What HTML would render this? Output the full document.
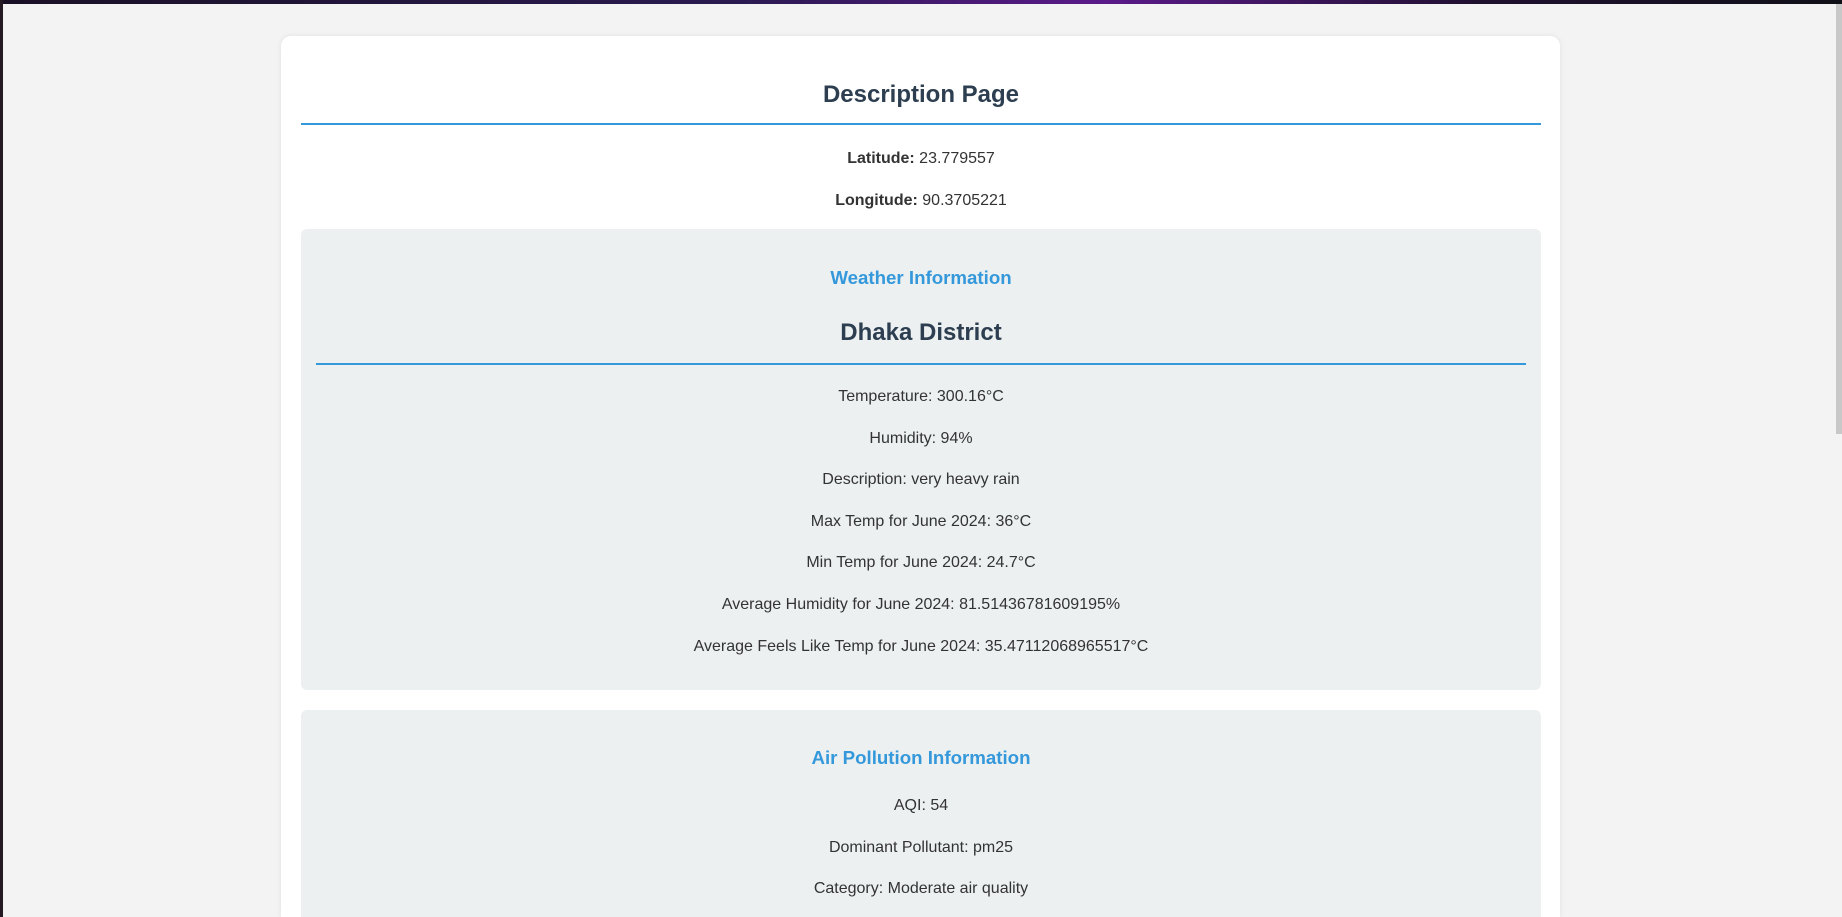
<!DOCTYPE html>
<html style="width:1842px;height:917px;overflow:hidden;"><head><meta charset="utf-8"><style>
html,body{margin:0;padding:0;}
body{width:1842px;height:917px;overflow:hidden;background:#f3f3f3;font-family:"Liberation Sans",sans-serif;color:#333;position:relative;}
.topbar{position:absolute;left:0;top:0;width:1842px;height:4px;background:linear-gradient(90deg,#1a1025,#2a1a50 40%,#5a1a8a 60%,#201030 80%,#101018);}
.leftbar{position:absolute;left:0;top:0;width:3px;height:917px;background:#241a24;}
.scroll{position:absolute;left:1836px;top:4px;width:6px;height:430px;background:#c8c8c8;}
.card{position:absolute;left:281px;top:36px;width:1279px;height:881px;background:#fff;border-radius:10px 10px 0 0;box-shadow:0 0 6px rgba(0,0,0,.08);overflow:hidden;}
.h1{position:absolute;left:20px;width:1240px;top:41px;height:36px;line-height:36px;text-align:center;font-size:24px;font-weight:bold;color:#2c3e50;}
.hr1{position:absolute;left:20px;width:1240px;top:87px;height:2px;background:#3498db;}
.p{text-align:center;font-size:16px;}
.lat{position:absolute;left:20px;width:1240px;top:111px;line-height:24px;}
.lon{position:absolute;left:20px;width:1240px;top:153px;line-height:24px;}
.box{position:absolute;left:20px;width:1240px;background:#ecf0f1;border-radius:6px;overflow:hidden;}
.t{text-align:center;font-size:18.7px;font-weight:bold;color:#3498db;height:30px;line-height:30px;}
.d{text-align:center;font-size:24px;font-weight:bold;color:#2c3e50;line-height:40px;margin:0 15px;padding-bottom:10px;border-bottom:2px solid #3498db;}
.l{text-align:center;font-size:16px;line-height:41.6px;}
</style></head><body>
<div class="topbar"></div><div class="leftbar"></div><div class="scroll"></div>
<div class="card">
<div class="h1">Description Page</div>
<div class="hr1"></div>
<div class="p lat"><b>Latitude:</b> 23.779557</div>
<div class="p lon"><b>Longitude:</b> 90.3705221</div>
<div class="box" style="top:193px;height:461px;">
<div class="t" style="margin-top:34px;">Weather Information</div>
<div class="d" style="margin-top:20px;">Dhaka District</div>
<div style="margin-top:11px;">
<div class="l">Temperature: 300.16°C</div>
<div class="l">Humidity: 94%</div>
<div class="l">Description: very heavy rain</div>
<div class="l">Max Temp for June 2024: 36°C</div>
<div class="l">Min Temp for June 2024: 24.7°C</div>
<div class="l">Average Humidity for June 2024: 81.51436781609195%</div>
<div class="l">Average Feels Like Temp for June 2024: 35.47112068965517°C</div>
</div>
</div>
<div class="box" style="top:674px;height:207px;border-radius:6px 6px 0 0;">
<div class="t" style="margin-top:33px;">Air Pollution Information</div>
<div style="margin-top:12px;">
<div class="l">AQI: 54</div>
<div class="l">Dominant Pollutant: pm25</div>
<div class="l">Category: Moderate air quality</div>
</div>
</div>
</div>
</body></html>
